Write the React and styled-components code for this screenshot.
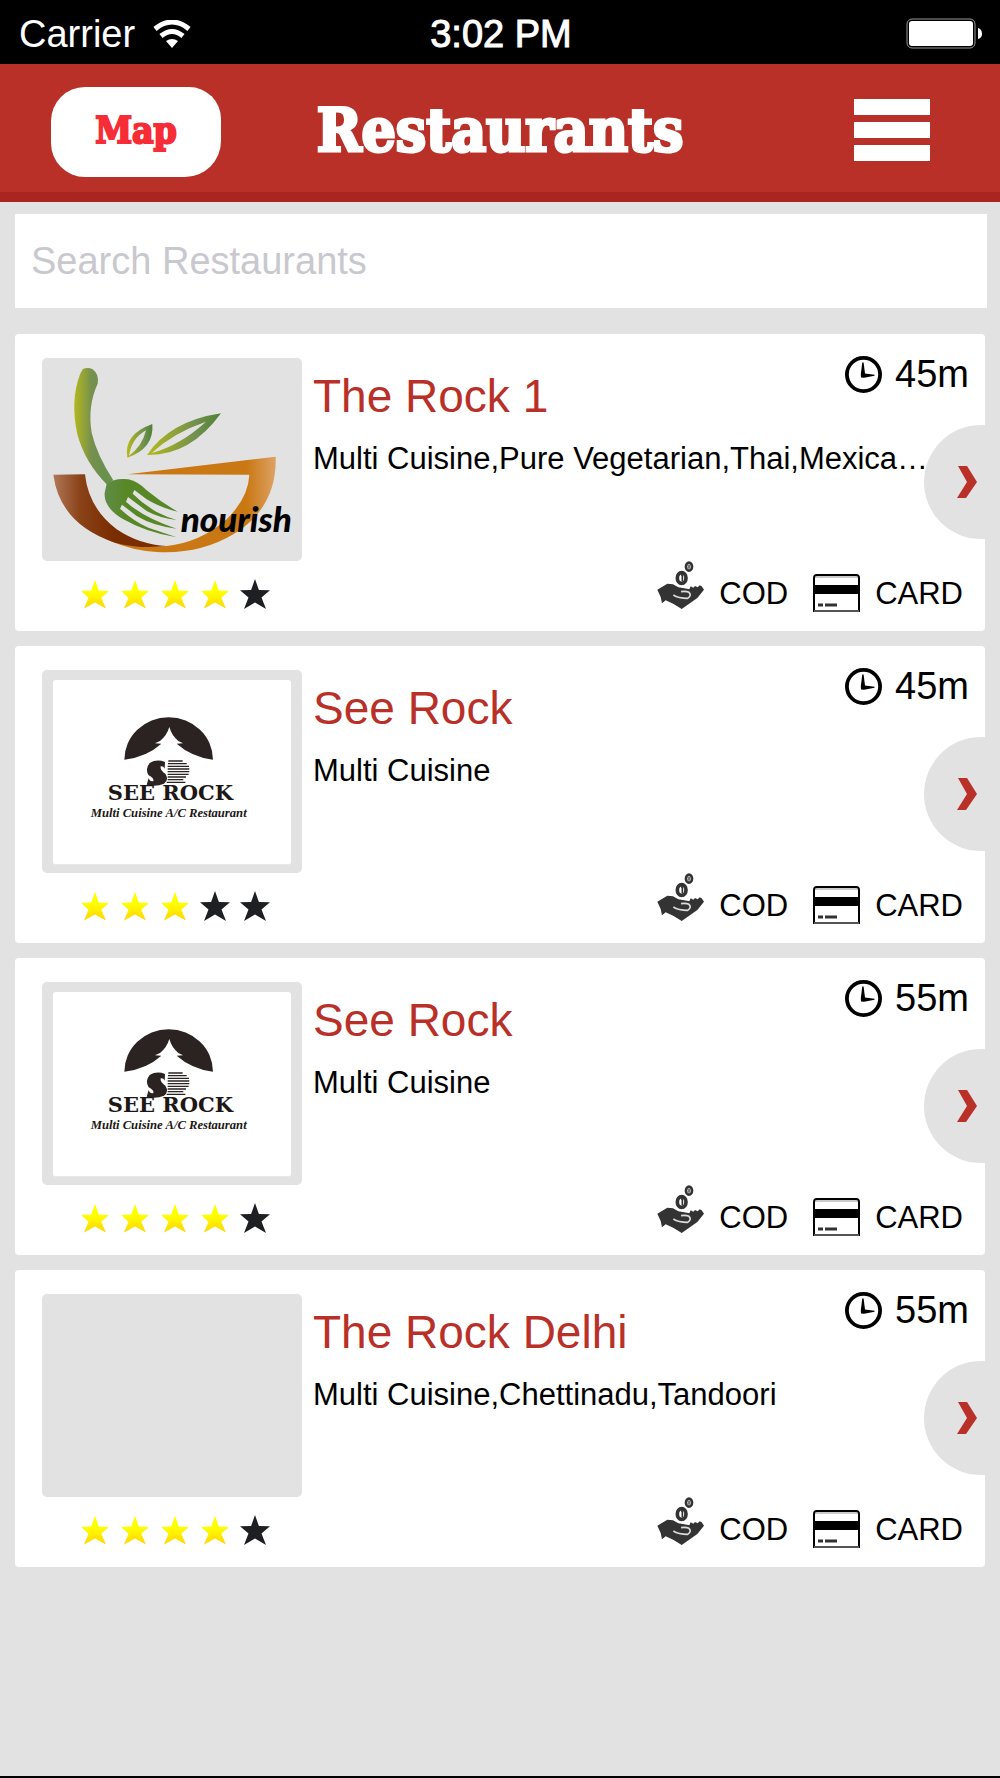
import React from 'react'
import styled, { createGlobalStyle } from 'styled-components'

const GlobalStyle = createGlobalStyle`
  * {
    box-sizing: border-box;
  }

  body {
    margin: 0;
    background: #e2e2e2;
    font-family: "Liberation Sans", Arial, sans-serif;
    color: #000;
  }
`

const StyledPage = styled.div`
  min-height: 100vh;
  border-bottom: 2px solid #000;
`

const StyledStatusBar = styled.div`
  display: grid;
  grid-template-columns: 1fr auto 1fr;
  align-items: center;
  height: 64px;
  padding: 4px 17px 0 19px;
  background: #000;
  color: #fff;
  font-size: 38px;
  line-height: 44px;
`

const StyledCarrier = styled.div`
  display: flex;
  align-items: center;
  gap: 18px;
`

const StyledClock = styled.div`
  -webkit-text-stroke: 1px #fff;
`

const StyledBattery = styled.svg`
  justify-self: end;
`

const StyledHeader = styled.header`
  display: grid;
  grid-template-columns: 1fr auto 1fr;
  align-items: center;
  height: 138px;
  padding: 4px 51px 0;
  background: #b93028;
  border-bottom: 10px solid #ab2520;
  font-family: "DejaVu Serif Condensed", "DejaVu Serif", serif;
  font-weight: 700;
`

const StyledMapButton = styled.button`
  justify-self: start;
  width: 170px;
  height: 90px;
  margin-top: 4px;
  padding: 0 0 4px;
  border: 0;
  border-radius: 34px 32px 36px 34px;
  background: #fff;
  color: #f62d37;
  font: inherit;
  font-size: 37px;
  -webkit-text-stroke: 2px #f62d37;
`

const StyledTitle = styled.h1`
  margin: 0;
  color: #fff;
  font-size: 60px;
  line-height: 64px;
  -webkit-text-stroke: 3px #fff;
`

const StyledMenuButton = styled.button`
  justify-self: end;
  display: flex;
  flex-direction: column;
  gap: 7px;
  width: 76px;
  margin-right: 19px;
  padding: 0;
  border: 0;
  background: none;
`

const StyledMenuBar = styled.span`
  height: 16px;
  background: #fff;
`

const StyledContent = styled.main`
  padding: 12px 15px;
`

const StyledSearch = styled.input`
  display: block;
  width: calc(100% + 2px);
  height: 94px;
  padding: 0 16px;
  border: 0;
  border-radius: 0;
  background: #fff;
  font-family: inherit;
  font-size: 38px;

  &::placeholder {
    color: #c8c8ce;
    opacity: 1;
  }
`

const StyledList = styled.ul`
  display: flex;
  flex-direction: column;
  gap: 15px;
  margin: 26px 0 0;
  padding: 0;
  list-style: none;
`

const StyledCard = styled.li`
  position: relative;
  display: grid;
  grid-template-columns: 260px 1fr;
  gap: 11px;
  padding: 24px 16px 19px 27px;
  border-radius: 4px;
  background: #fff;
`

const StyledThumb = styled.div`
  height: 203px;
  border-radius: 5px;
  background: #e2e2e2;
  overflow: hidden;

  svg {
    display: block;
  }
`

const StyledStars = styled.div`
  display: flex;
  justify-content: center;
  gap: 10px;
  padding: 18px 0 3px 6px;
`

const StyledInfo = styled.div`
  position: relative;
  z-index: 1;
  display: flex;
  flex-direction: column;
  pointer-events: none;
`

const StyledInfoHead = styled.div`
  display: flex;
  justify-content: space-between;
  align-items: flex-start;
`

const StyledName = styled.h2`
  margin: 13px 0 20px;
  color: #b93028;
  font-size: 46px;
  font-weight: 400;
  line-height: 50px;
`

const StyledTime = styled.div`
  display: flex;
  align-items: center;
  gap: 13px;
  height: 32px;
  font-size: 38px;
  line-height: 32px;
`

const StyledCuisine = styled.p`
  margin: 0;
  font-size: 31px;
  line-height: 36px;
  white-space: nowrap;
`

const StyledPayments = styled.div`
  display: flex;
  justify-content: flex-end;
  align-items: flex-end;
  gap: 25px;
  margin-top: auto;
  padding-right: 6px;
`

const StyledPayment = styled.span`
  display: flex;
  align-items: flex-end;
  gap: 15px;
  font-size: 31px;
  line-height: 36px;
`

const StyledArrow = styled.button`
  position: absolute;
  top: 91px;
  right: 0;
  display: flex;
  justify-content: flex-end;
  align-items: center;
  width: 61px;
  height: 114px;
  padding: 0 8px 0 0;
  border: 0;
  border-radius: 57px 0 0 57px;
  background: #e2e2e2;
`

const WifiIcon = () => (
  <svg width="38" height="28" viewBox="0 0 38 28" fill="none" stroke="#fff" strokeWidth="5" aria-hidden="true">
    <path d="M2 9 Q19 -5 36 9" />
    <path d="M8 16 Q19 7 30 16" />
    <path d="M13 21 Q19 17 25 21 L19 28 Z" fill="#fff" stroke="none" />
  </svg>
)

const BatteryIcon = () => (
  <StyledBattery width="77" height="32" viewBox="0 0 77 32" aria-hidden="true">
    <rect x="1" y="1" width="68" height="29" rx="5" fill="#000" stroke="#999" />
    <rect x="3" y="3" width="64" height="25" rx="3" fill="#fff" />
    <path d="M72 10 Q76 11 76 16 Q76 20 72 21 Z" fill="#fff" />
  </StyledBattery>
)

const ClockIcon = () => (
  <svg width="37" height="37" viewBox="0 0 37 37" aria-hidden="true">
    <circle cx="18.5" cy="18.5" r="16.6" fill="none" stroke="#000" strokeWidth="3.8" />
    <path d="M17.3 6.5 L18.6 6.5 L20 17.6 L29.5 18.7 L29.5 19.8 L19 21.8 L16 21.5 L15.8 18 Z" />
  </svg>
)

const CashIcon = () => (
  <svg width="47" height="51" viewBox="48 720 141 153" fill="none" aria-hidden="true">
    <ellipse cx="122" cy="771" rx="13" ry="16" stroke="#333" strokeWidth="11" />
    <path d="M120 763 L124 761 V781" stroke="#333" strokeWidth="5" />
    <ellipse cx="144" cy="737" rx="9" ry="12" stroke="#333" strokeWidth="8" />
    <path d="M144 731 V743" stroke="#333" strokeWidth="4" />
    <path
      d="M49 806 L79 788 L96 790 L112 799 L130 802 L145 805 L149 796 L157 800 L162 795 L170 799 L176 793 L182 796 L189 806 L169 831 L122 864 L98 849 L74 838 L63 847 L59 828 Z"
      fill="#333"
    />
    <path d="M97 822 Q112 832 140 832 Q153 823 144 814 Q136 810 120 812" stroke="#ddd" strokeWidth="5" />
  </svg>
)

const CardIcon = () => (
  <svg width="47" height="38" viewBox="0 0 47 38" aria-hidden="true">
    <path d="M1 38 V4 Q1 1 4 1 H43 Q46 1 46 4 V38" fill="#fff" stroke="#000" strokeWidth="2" />
    <path d="M2 3 H45" stroke="#999" />
    <path d="M1 11 H46 V20 H1 Z" />
    <path d="M1 37 H46" stroke="#555" strokeWidth="2" />
    <path d="M5 31 H10 M12 31 H24" stroke="#333" strokeWidth="3" />
  </svg>
)

const StarIcon = ({ filled }) => (
  <svg width="30" height="30" viewBox="0 0 30 30" aria-hidden="true">
    <defs>
      <linearGradient id="star" x1="0" y1="0" x2="0" y2="1">
        <stop offset="0.4" stopColor="#ffff00" />
        <stop offset="1" stopColor="#ffd400" />
      </linearGradient>
    </defs>
    <path
      d={filled
        ? 'M15 1 L18.8 11.5 L29 12 L21.2 18.8 L26 29.6 L15 23.6 L4 29.6 L8.5 18.8 L1 12 L11.2 11.5 Z'
        : 'M15 0 L18.9 11 L30 11.2 L21.5 18.6 L26 30 L15 23.6 L4 30 L8.5 18.6 L0 11.2 L11.1 11 Z'}
      fill={filled ? 'url(#star)' : '#1d1f22'}
    />
  </svg>
)

const ChevronIcon = () => (
  <svg width="20" height="32" viewBox="0 0 20 32" aria-hidden="true">
    <path d="M1 0 H10 L20 16 L9 32 H0 L10 16 Z" fill="#b93028" />
  </svg>
)

const NourishLogo = () => (
  <svg width="260" height="203" viewBox="126 111 780 609" role="img" aria-label="nourish">
    <defs>
      <linearGradient id="leaf">
        <stop offset="0" stopColor="#b3b91a" />
        <stop offset="0.65" stopColor="#73914f" />
        <stop offset="1" stopColor="#4e8236" />
      </linearGradient>
      <linearGradient id="handle" gradientUnits="userSpaceOnUse" x1="222" y1="0" x2="310" y2="0">
        <stop offset="0" stopColor="#b4b91c" />
        <stop offset="0.6" stopColor="#76904f" />
        <stop offset="1" stopColor="#6a904e" />
      </linearGradient>
      <linearGradient id="fork" gradientUnits="userSpaceOnUse" x1="314" y1="0" x2="380" y2="0">
        <stop offset="0" stopColor="#5f8c46" />
        <stop offset="1" stopColor="#588726" />
      </linearGradient>
      <linearGradient id="brown" gradientUnits="userSpaceOnUse" x1="160" y1="0" x2="340" y2="0">
        <stop offset="0" stopColor="#b07757" />
        <stop offset="0.45" stopColor="#8a4218" />
        <stop offset="1" stopColor="#7a2d00" />
      </linearGradient>
      <linearGradient id="orange" gradientUnits="userSpaceOnUse" x1="740" y1="0" x2="830" y2="0">
        <stop offset="0" stopColor="#ca7813" />
        <stop offset="1" stopColor="#dda468" />
      </linearGradient>
    </defs>
    <path d="M383 460 L827 407 Q832 560 700 640 Q600 700 470 693 Q400 690 325 658 Q420 685 500 675 Q600 665 680 595 Q745 530 748 461 Z" fill="url(#orange)" />
    <path d="M160 461 L255 460 Q265 560 350 625 Q420 672 500 675 Q420 685 345 665 Q180 610 160 461 Z" fill="url(#brown)" />
    <path d="M248 145 Q262 137 278 145 Q298 160 293 188 Q262 255 275 335 Q290 400 340 478 L320 490 Q255 425 232 340 Q210 240 240 160 Z" fill="url(#handle)" />
    <path
      d="M320 488 Q345 470 385 475 Q415 482 440 508 Q485 545 533 572 Q480 560 440 535 L403 507 L398 518 Q430 550 470 573 Q500 588 530 597 Q480 592 440 570 L384 528 L378 542 Q430 590 530 623 Q460 615 410 585 L366 551 L360 563 Q400 600 445 620 L530 649 Q440 635 370 595 Q310 560 314 515 Z"
      fill="url(#fork)"
    />
    <path d="M382 410 Q370 340 457 309 Q463 382 382 410 Z" fill="url(#leaf)" />
    <path d="M387 404 Q395 352 438 328 Q426 377 387 404 Z" fill="#e2e2e2" />
    <path d="M441 402 Q510 300 663 277 Q570 405 441 402 Z" fill="url(#leaf)" />
    <path d="M455 396 Q520 335 618 302 Q540 373 455 396 Z" fill="#e2e2e2" />
    <text x="542" y="633" fontFamily="Lato, sans-serif" fontSize="105" fontWeight="900" fontStyle="italic">nourish</text>
  </svg>
)

const SeeRockLogo = () => (
  <svg width="260" height="203" viewBox="126 89 780 609" role="img" aria-label="See Rock">
    <rect x="159" y="119" width="714" height="553" rx="8" fill="#fff" />
    <path
      d="M373 358 A133 127 0 0 1 639 358 Q575 350 530 310 L549 309 L535 302 Q515 285 508 260 Q501 285 480 302 L465 309 L484 310 Q440 350 373 358 Z"
      fill="#2b2321"
    />
    <path
      d="M505 362 H548 M504 370 H560 M503 378 H567 M503 386 H568 M503 394 H568 M503 402 H566 M503 410 H558 M503 418 H550 M500 426 H556"
      stroke="#2b2321"
      strokeWidth="4"
    />
    <path
      d="M495 365 Q470 355 449 368 Q434 386 446 405 Q463 414 460 422 Q450 425 446 413 L440 433 Q468 440 492 430 Q508 418 496 400 Q480 390 482 378 Q490 376 494 385 Z"
      fill="#2b2321"
    />
    <text x="511" y="480" textAnchor="middle" fontFamily="'DejaVu Serif', serif" fontSize="63" fontWeight="700" fill="#1d1715">SEE ROCK</text>
    <text x="506" y="530" textAnchor="middle" fontFamily="'Liberation Serif', serif" fontSize="38" fontWeight="700" fontStyle="italic" fill="#1d1715">Multi Cuisine A/C Restaurant</text>
  </svg>
)

const restaurants = [
  { id: 1, name: 'The Rock 1', cuisine: 'Multi Cuisine,Pure Vegetarian,Thai,Mexica…', time: '45m', rating: 4, Logo: NourishLogo },
  { id: 2, name: 'See Rock', cuisine: 'Multi Cuisine', time: '45m', rating: 3, Logo: SeeRockLogo },
  { id: 3, name: 'See Rock', cuisine: 'Multi Cuisine', time: '55m', rating: 4, Logo: SeeRockLogo },
  { id: 4, name: 'The Rock Delhi', cuisine: 'Multi Cuisine,Chettinadu,Tandoori', time: '55m', rating: 4 },
]

const Restaurant = ({ name, cuisine, time, rating, Logo }) => (
  <StyledCard>
    <div>
      <StyledThumb>{Logo && <Logo />}</StyledThumb>
      <StyledStars role="img" aria-label={`${rating} of 5 stars`}>
        {[1, 2, 3, 4, 5].map(n => <StarIcon key={n} filled={n <= rating} />)}
      </StyledStars>
    </div>
    <StyledInfo>
      <StyledInfoHead>
        <StyledName>{name}</StyledName>
        <StyledTime><ClockIcon />{time}</StyledTime>
      </StyledInfoHead>
      <StyledCuisine>{cuisine}</StyledCuisine>
      <StyledPayments>
        <StyledPayment><CashIcon />COD</StyledPayment>
        <StyledPayment><CardIcon />CARD</StyledPayment>
      </StyledPayments>
    </StyledInfo>
    <StyledArrow type="button" aria-label={`Open ${name}`}>
      <ChevronIcon />
    </StyledArrow>
  </StyledCard>
)

class App extends React.Component {

  render() {
    return (
      <StyledPage>
        <GlobalStyle />
        <StyledStatusBar>
          <StyledCarrier>Carrier<WifiIcon /></StyledCarrier>
          <StyledClock>3:02 PM</StyledClock>
          <BatteryIcon />
        </StyledStatusBar>
        <StyledHeader>
          <StyledMapButton type="button">Map</StyledMapButton>
          <StyledTitle>Restaurants</StyledTitle>
          <StyledMenuButton type="button" aria-label="Menu">
            <StyledMenuBar />
            <StyledMenuBar />
            <StyledMenuBar />
          </StyledMenuButton>
        </StyledHeader>
        <StyledContent>
          <StyledSearch type="search" placeholder="Search Restaurants" aria-label="Search Restaurants" />
          <StyledList>
            {restaurants.map(r => <Restaurant key={r.id} {...r} />)}
          </StyledList>
        </StyledContent>
      </StyledPage>
    )
  }
}

export default App
